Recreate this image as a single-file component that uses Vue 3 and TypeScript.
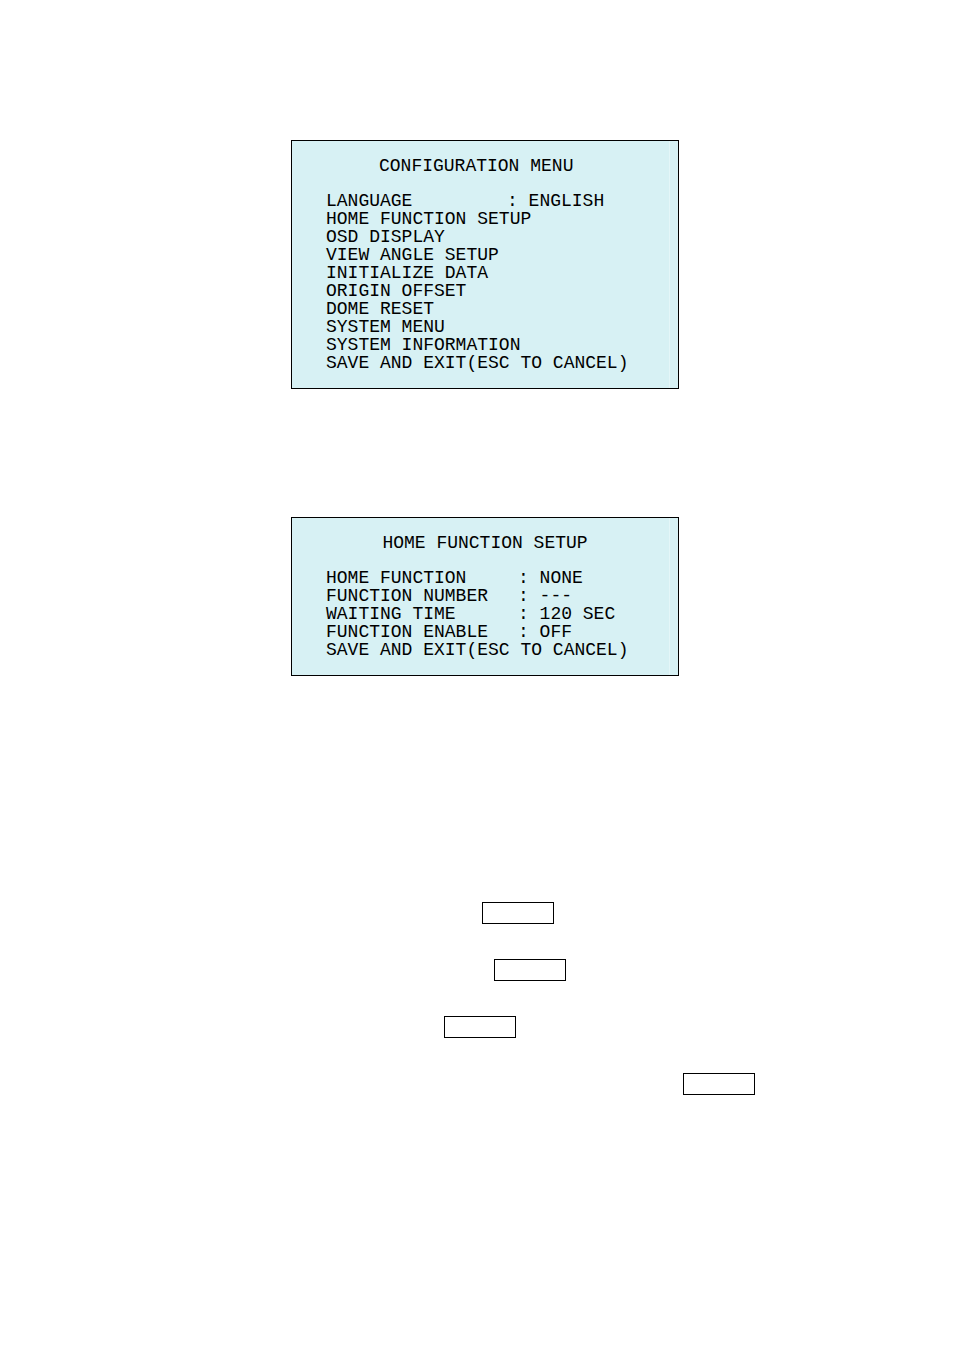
<script setup lang="ts">
interface MenuRow {
  label: string
  value?: string
}

interface Menu {
  id: string
  title: string
  rows: MenuRow[]
}

const menus: Menu[] = [
  {
    id: 'configuration',
    title: 'CONFIGURATION MENU',
    rows: [
      { label: 'LANGUAGE', value: 'ENGLISH' },
      { label: 'HOME FUNCTION SETUP' },
      { label: 'OSD DISPLAY' },
      { label: 'VIEW ANGLE SETUP' },
      { label: 'INITIALIZE DATA' },
      { label: 'ORIGIN OFFSET' },
      { label: 'DOME RESET' },
      { label: 'SYSTEM MENU' },
      { label: 'SYSTEM INFORMATION' },
      { label: 'SAVE AND EXIT(ESC TO CANCEL)' },
    ],
  },
  {
    id: 'home',
    title: 'HOME FUNCTION SETUP',
    rows: [
      { label: 'HOME FUNCTION', value: 'NONE' },
      { label: 'FUNCTION NUMBER', value: '---' },
      { label: 'WAITING TIME', value: '120 SEC' },
      { label: 'FUNCTION ENABLE', value: 'OFF' },
      { label: 'SAVE AND EXIT(ESC TO CANCEL)' },
    ],
  },
]

const frames: string[] = ['first', 'second', 'third', 'fourth']
</script>

<template>
  <main class="page">
    <section v-for="menu in menus" :key="menu.id" class="panel" :class="menu.id">
      <h2 class="title">{{ menu.title }}</h2>
      <ul class="rows">
        <li v-for="row in menu.rows" :key="row.label" class="row">
          <span class="label">{{ row.label }}</span>
          <span v-if="row.value" class="value">: {{ row.value }}</span>
        </li>
      </ul>
    </section>
    <div class="frames">
      <div v-for="frame in frames" :key="frame" class="frame" :class="frame"></div>
    </div>
  </main>
</template>

<style>
body {
  margin: 0;
  background: #fff;
}
</style>

<style scoped>
.page {
  box-sizing: border-box;
  min-height: 100vh;
  padding: 140px 0 0 16px;
  display: flex;
  flex-direction: column;
  align-items: center;
  background: #fff;
  color: #000;
  font-family: "Liberation Mono", "DejaVu Sans Mono", monospace;
  font-size: 18px;
  line-height: 18px;
}

.panel {
  box-sizing: border-box;
  width: 388px;
  max-width: 100%;
  padding: 16px 8px 16px 34px;
  border: 1px solid #000;
  background: linear-gradient(#e4f6f8, #e4f6f8) right 8px top / 1px 100% no-repeat #d7f1f4;
  white-space: nowrap;
}

.panel + .panel {
  margin-top: 128px;
}

.title {
  margin: 0 0 17px;
  font-size: inherit;
  font-weight: 400;
}

.configuration .title {
  padding-left: 53px;
}

.home .title {
  padding-right: 26px;
  text-align: center;
}

.rows {
  margin: 0;
  padding: 0;
  list-style: none;
}

.row {
  display: flex;
}

.row .value {
  flex: none;
}

.configuration .label {
  min-width: 181px;
}

.home .label {
  min-width: 192px;
}

.frames {
  align-self: stretch;
  margin: 226px 16px 0 0;
  display: flex;
  flex-direction: column;
  gap: 35px;
}

.frame {
  box-sizing: border-box;
  width: 72px;
  height: 22px;
  border: 1px solid #000;
}

.first {
  margin-left: calc(50% + 5px);
}

.second {
  margin-left: calc(50% + 17px);
}

.third {
  margin-left: calc(50% - 33px);
}

.fourth {
  margin-left: calc(50% + 206px);
}
</style>
